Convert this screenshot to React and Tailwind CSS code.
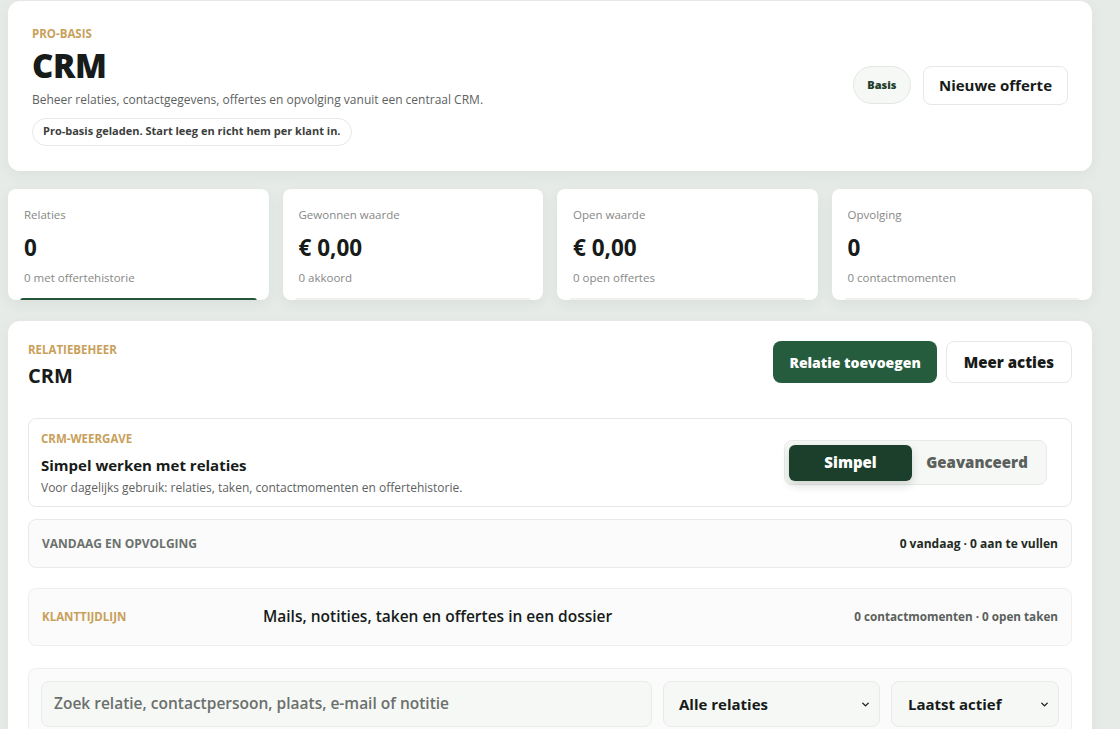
import { ChevronDown } from "lucide-react";

const stats = [
  { label: "Relaties", value: "0", sub: "0 met offertehistorie", active: true },
  { label: "Gewonnen waarde", value: "€ 0,00", sub: "0 akkoord" },
  { label: "Open waarde", value: "€ 0,00", sub: "0 open offertes" },
  { label: "Opvolging", value: "0", sub: "0 contactmomenten" },
];

function Eyebrow({ children, className = "" }) {
  return (
    <div className={`text-[11.5px] font-bold uppercase leading-4 text-[#c9a05a] ${className}`}>
      {children}
    </div>
  );
}

function StatCard({ label, value, sub, active }) {
  return (
    <div className="relative h-[111px] overflow-hidden rounded-lg bg-white px-4 pt-[18px] shadow-[0_4px_14px_rgba(30,50,40,0.06)]">
      <div className="text-[11.5px] leading-4 text-[#858986]">{label}</div>
      <div className="mt-[14px] text-[22.5px] font-bold leading-none text-[#171b19]">{value}</div>
      <div className="mt-[10px] text-[11.5px] leading-4 text-[#858986]">{sub}</div>
      <div
        className={`absolute bottom-[-4px] left-3 right-3 h-[6px] rounded-full ${
          active ? "bg-[#24573a]" : "bg-[#eef1ef]"
        }`}
      />
    </div>
  );
}

export default function App() {
  return (
    <div
      className="min-h-screen bg-[#e6ebe8] pl-2 pr-7 pt-px text-[#171b19]"
      style={{ fontFamily: "'Open Sans', 'Noto Sans', sans-serif" }}
    >
      {/* header */}
      <div className="flex h-[170px] items-center justify-between rounded-xl bg-white pl-6 pr-6 shadow-[0_4px_14px_rgba(30,50,40,0.05)]">
        <div className="pb-[1px]">
          <Eyebrow>Pro-basis</Eyebrow>
          <h1 className="mt-[4px] text-[33px] font-extrabold leading-[40px] tracking-[-0.01em]">CRM</h1>
          <p className="mt-[6px] text-[12px] leading-4 text-[#5d625f]">
            Beheer relaties, contactgegevens, offertes en opvolging vanuit een centraal CRM.
          </p>
          <div className="mt-[10px] inline-flex h-[28px] items-center rounded-full border border-[#e6e9e7] px-[10px] text-[11px] font-bold text-[#3b403d]">
            Pro-basis geladen. Start leeg en richt hem per klant in.
          </div>
        </div>
        <div className="mb-[2px] flex items-center gap-3">
          <div className="flex h-[38px] w-[58px] items-center justify-center rounded-full border border-[#e3e7e4] bg-[#f6f8f6] text-[11px] font-extrabold text-[#1f3d2c]">
            Basis
          </div>
          <button className="h-[39px] rounded-lg border border-[#e5e8e6] bg-white px-[15px] text-[15px] font-bold text-[#171b19]">
            Nieuwe offerte
          </button>
        </div>
      </div>

      {/* stats */}
      <div className="mt-[18px] grid grid-cols-4 gap-[14px]">
        {stats.map((s) => (
          <StatCard key={s.label} {...s} />
        ))}
      </div>

      {/* main */}
      <div className="mt-[21px] rounded-xl bg-white px-5 pt-5 pb-5 shadow-[0_4px_14px_rgba(30,50,40,0.05)]">
        <div className="flex items-start justify-between">
          <div className="pt-[1px]">
            <Eyebrow>Relatiebeheer</Eyebrow>
            <div className="mt-[4px] text-[20px] font-bold leading-7">CRM</div>
          </div>
          <div className="flex gap-[9px]">
            <button className="h-[42px] rounded-lg bg-[#245c3d] px-4 text-[14px] font-extrabold text-white">
              Relatie toevoegen
            </button>
            <button className="h-[42px] rounded-lg border border-[#e5e8e6] bg-white px-[17px] text-[15px] font-extrabold text-[#171b19]">
              Meer acties
            </button>
          </div>
        </div>

        {/* weergave */}
        <div className="mt-[28px] flex h-[89px] items-center justify-between rounded-lg border border-[#e5e8e6] bg-white pl-3 pr-6">
          <div className="pt-[2px]">
            <Eyebrow>CRM-weergave</Eyebrow>
            <div className="mt-[8px] text-[15px] font-bold leading-5 text-[#171b19]">Simpel werken met relaties</div>
            <div className="mt-[5px] text-[12px] leading-4 text-[#5d625f]">
              Voor dagelijks gebruik: relaties, taken, contactmomenten en offertehistorie.
            </div>
          </div>
          <div className="flex h-[45px] items-center rounded-lg border border-[#e8ebe9] bg-[#f6f8f6] p-1">
            <div className="flex h-[36px] w-[123px] items-center justify-center rounded-md bg-[#1b3f2b] text-[15px] font-extrabold text-white shadow-[0_4px_10px_rgba(20,40,30,0.18)]">
              Simpel
            </div>
            <div className="flex h-[36px] w-[130px] items-center justify-center text-[15px] font-extrabold text-[#5b605c]">
              Geavanceerd
            </div>
          </div>
        </div>

        {/* vandaag */}
        <div className="mt-[12px] flex h-[49px] items-center justify-between rounded-lg border border-[#e8ebe9] bg-[#fafbfa] px-[13px]">
          <div className="text-[12px] font-bold uppercase text-[#6b716d]">Vandaag en opvolging</div>
          <div className="text-[12px] font-bold text-[#1f2a24]">0 vandaag · 0 aan te vullen</div>
        </div>

        {/* tijdlijn */}
        <div className="mt-[20px] flex h-[58px] items-center rounded-lg border border-[#eef0ee] bg-[#fafbfa] px-[13px]">
          <Eyebrow className="w-[221px]">Klanttijdlijn</Eyebrow>
          <div className="flex-1 text-[15.5px] font-semibold text-[#171b19]">
            Mails, notities, taken en offertes in een dossier
          </div>
          <div className="text-[11.7px] font-bold text-[#5a615c]">0 contactmomenten · 0 open taken</div>
        </div>

        {/* filters */}
        <div className="mt-[22px] flex gap-[11px] rounded-lg border border-[#eef0ee] bg-[#fafbfa] px-3 py-3">
          <div className="flex h-[46px] flex-1 items-center rounded-lg border border-[#e8ebe9] bg-[#f6f8f6] px-3 text-[15.5px] font-semibold text-[#6b706c]">
            Zoek relatie, contactpersoon, plaats, e-mail of notitie
          </div>
          <div className="flex h-[46px] w-[217px] items-center justify-between rounded-lg border border-[#e8ebe9] bg-[#f6f8f6] pl-[15px] pr-2 text-[15px] font-bold text-[#171b19]">
            Alle relaties
            <ChevronDown size={11} strokeWidth={3} />
          </div>
          <div className="flex h-[46px] w-[168px] items-center justify-between rounded-lg border border-[#e8ebe9] bg-[#f6f8f6] pl-4 pr-2 text-[15px] font-bold text-[#171b19]">
            Laatst actief
            <ChevronDown size={11} strokeWidth={3} />
          </div>
        </div>
      </div>
    </div>
  );
}
